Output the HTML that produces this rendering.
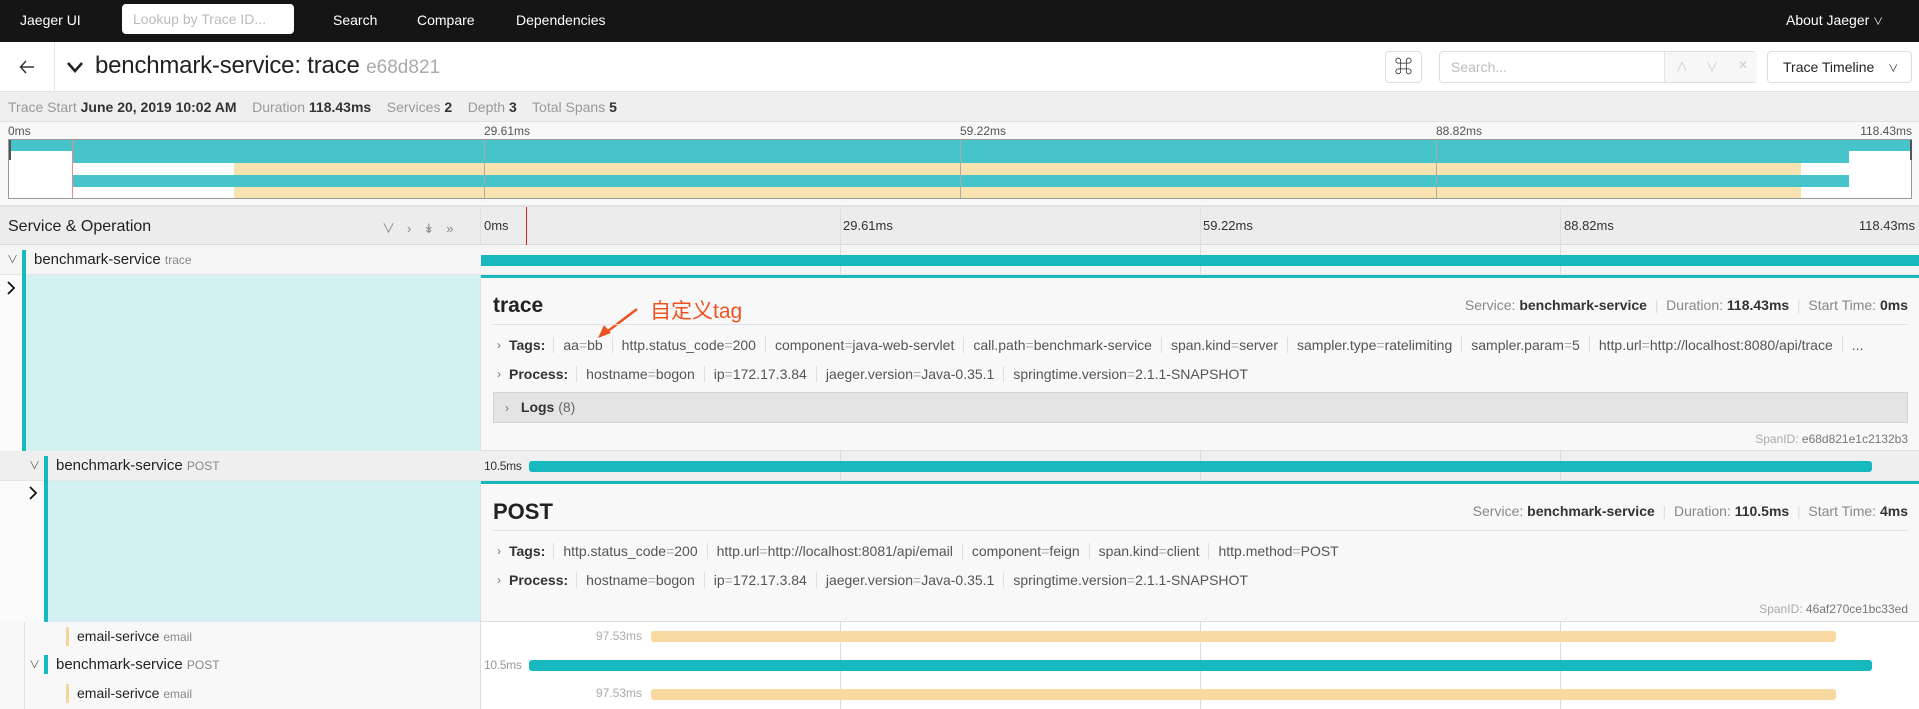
<!DOCTYPE html>
<html><head><meta charset="utf-8"><style>
*{box-sizing:border-box;margin:0;padding:0}
body{width:1919px;height:709px;overflow:hidden;background:#fff;font-family:"Liberation Sans","Noto Sans CJK SC",sans-serif;color:#222;position:relative}
.a{position:absolute;white-space:nowrap}
.g{color:#888}
.tagrow{position:absolute;display:flex;align-items:center;font-size:14px;height:20px}
.tagrow .lb{font-weight:bold;color:#333;margin-right:8px}
.tagrow .it{padding:0 9px;border-left:1px solid #ddd;color:#555}
.tagrow .it:first-of-type{border-left:none;padding-left:0}
.eq{color:#aaa}
.car{color:#777;font-size:12px;margin-right:8px}
.tick{position:absolute;width:1px;background:#ddd}
.bar{position:absolute;border-radius:3px}
</style></head><body>
<!-- nav -->
<div class="a" style="left:0;top:0;width:1919px;height:42px;background:#151515"></div>
<div class="a" style="left:20px;top:12px;color:#fff;font-size:14px">Jaeger UI</div>
<div class="a" style="left:122px;top:4px;width:172px;height:30px;background:#fff;border-radius:4px;color:#bbb;font-size:14px;padding:7px 11px">Lookup by Trace ID...</div>
<div class="a" style="left:333px;top:12px;color:#fff;font-size:14px">Search</div>
<div class="a" style="left:417px;top:12px;color:#fff;font-size:14px">Compare</div>
<div class="a" style="left:516px;top:12px;color:#fff;font-size:14px">Dependencies</div>
<div class="a" style="left:1786px;top:12px;color:#fff;font-size:14px">About Jaeger <span style="font-size:10px">&#8744;</span></div>
<!-- header -->
<svg class="a" style="left:18px;top:58px" width="18" height="18" viewBox="0 0 18 18"><path d="M16 9H3M8 3L2.5 9 8 15" fill="none" stroke="#333" stroke-width="1.5"/></svg>
<div class="a" style="left:54px;top:42px;width:1px;height:49px;background:#e4e4e4"></div>
<svg class="a" style="left:66px;top:60px" width="18" height="14" viewBox="0 0 18 14"><path d="M2 3L9 11 16 3" fill="none" stroke="#222" stroke-width="2.6"/></svg>
<div class="a" style="left:95px;top:52px;font-size:24px;letter-spacing:-0.2px;font-weight:500">benchmark-service: trace <span style="color:#aaa;font-size:19px;letter-spacing:0">e68d821</span></div>
<div class="a" style="left:1385px;top:51px;width:37px;height:32px;border:1px solid #ddd;border-radius:4px;text-align:center;font-size:18px;line-height:30px">&#8984;</div>
<div class="a" style="left:1439px;top:51px;width:318px;height:32px;border:1px solid #ddd;border-radius:4px;background:#fff"></div>
<div class="a" style="left:1451px;top:59px;font-size:14px;color:#bbb">Search...</div>
<div class="a" style="left:1664px;top:52px;width:93px;height:30px;background:#f7f7f7;border-left:1px solid #e4e4e4"></div>
<div class="a" style="left:1676px;top:58px;color:#ccc;font-size:12px">&#8743;</div>
<div class="a" style="left:1706px;top:58px;color:#ccc;font-size:12px">&#8744;</div>
<div class="a" style="left:1738px;top:58px;color:#ccc;font-size:12px">&#10005;</div>
<div class="a" style="left:1767px;top:51px;width:145px;height:32px;border:1px solid #ddd;border-radius:4px;font-size:14px;padding:7px 15px">Trace Timeline <span style="font-size:10px;margin-left:10px">&#8744;</span></div>
<!-- summary -->
<div class="a" style="left:0;top:91px;width:1919px;height:31px;background:#efefef;border-top:1px solid #e2e2e2;border-bottom:1px solid #e2e2e2"></div>
<div class="a" style="left:8px;top:99px;font-size:14px;color:#999">Trace Start <b style="color:#333">June 20, 2019 10:02 AM</b>&nbsp;&nbsp;&nbsp; Duration <b style="color:#333">118.43ms</b>&nbsp;&nbsp;&nbsp; Services <b style="color:#333">2</b>&nbsp;&nbsp;&nbsp; Depth <b style="color:#333">3</b>&nbsp;&nbsp;&nbsp; Total Spans <b style="color:#333">5</b></div>
<!-- minimap -->
<div class="a" style="left:0;top:122px;width:1919px;height:85px;background:#f8f8f8;border-bottom:2px solid #e2e2e2"></div>
<div class="a" style="left:8px;top:124px;font-size:12px;color:#555">0ms</div>
<div class="a" style="left:484px;top:124px;font-size:12px;color:#555">29.61ms</div>
<div class="a" style="left:960px;top:124px;font-size:12px;color:#555">59.22ms</div>
<div class="a" style="left:1436px;top:124px;font-size:12px;color:#555">88.82ms</div>
<div class="a" style="right:7px;top:124px;font-size:12px;color:#555">118.43ms</div>
<div class="a" style="left:8px;top:139px;width:1904px;height:60px;background:#fff;border:1px solid #999"></div>
<div class="a" style="left:9px;top:140px;width:1903px;height:11px;background:#46c4c9"></div>
<div class="a" style="left:72px;top:151px;width:1777px;height:12px;background:#46c4c9"></div>
<div class="a" style="left:234px;top:163px;width:1567px;height:12px;background:#f8e2b0"></div>
<div class="a" style="left:72px;top:175px;width:1777px;height:12px;background:#46c4c9"></div>
<div class="a" style="left:234px;top:187px;width:1567px;height:11px;background:#f8e2b0"></div>
<div class="a" style="left:72px;top:140px;width:1px;height:58px;background:#f08a8a"></div>
<div class="a" style="left:9px;top:140px;width:2px;height:20px;background:#555"></div>
<div class="a" style="left:1910px;top:140px;width:2px;height:20px;background:#555"></div>
<div class="tick" style="left:484px;top:140px;height:58px;background:#aaa"></div>
<div class="tick" style="left:960px;top:140px;height:58px;background:#aaa"></div>
<div class="tick" style="left:1436px;top:140px;height:58px;background:#aaa"></div>
<!-- timeline header -->
<div class="a" style="left:0;top:207px;width:1919px;height:38px;background:#ececec;border-bottom:1px solid #d8d8d8"></div>
<div class="a" style="left:8px;top:218px;font-size:16px;color:#222">Service &amp; Operation</div>
<div class="a" style="left:382px;top:218px;font-size:13px;color:#888;letter-spacing:12px">&#8744;&#8250;&#8609;&#187;</div>
<div class="a" style="left:480px;top:207px;width:1px;height:502px;background:#ddd"></div>
<div class="a" style="left:484px;top:218px;font-size:13px;color:#333">0ms</div>
<div class="a" style="left:843px;top:218px;font-size:13px;color:#333">29.61ms</div>
<div class="a" style="left:1203px;top:218px;font-size:13px;color:#333">59.22ms</div>
<div class="a" style="left:1564px;top:218px;font-size:13px;color:#333">88.82ms</div>
<div class="a" style="right:4px;top:218px;font-size:13px;color:#333">118.43ms</div>
<div class="tick" style="left:840px;top:207px;height:38px"></div>
<div class="tick" style="left:1200px;top:207px;height:38px"></div>
<div class="tick" style="left:1560px;top:207px;height:38px"></div>
<div class="a" style="left:526px;top:207px;width:1px;height:38px;background:#d22"></div>
<!-- row1 -->
<div class="a" style="left:0;top:245px;width:1919px;height:30px;background:#f5f5f5;border-bottom:1px solid #e4e4e4"></div>
<div class="tick" style="left:840px;top:245px;height:30px"></div><div class="tick" style="left:1200px;top:245px;height:30px"></div><div class="tick" style="left:1560px;top:245px;height:30px"></div>
<div class="a" style="left:7px;top:251px;font-size:11px;color:#666">&#8744;</div>
<div class="a" style="left:22px;top:250px;width:4px;height:201px;background:#17b8be"></div>
<div class="a" style="left:34px;top:251px;font-size:15px">benchmark-service <span class="g" style="font-size:12px">trace</span></div>
<div class="a" style="left:481px;top:255px;width:1438px;height:11px;background:#17b8be"></div>
<!-- detail1 -->
<div class="a" style="left:26px;top:275px;width:454px;height:176px;background:#d3f1f2"></div>
<div class="a" style="left:0;top:275px;width:22px;height:176px;background:#fafafa"></div>
<svg class="a" style="left:6px;top:281px" width="10" height="14" viewBox="0 0 10 14"><path d="M2 1L8 7 2 13" fill="none" stroke="#111" stroke-width="1.8"/></svg>
<div class="a" style="left:481px;top:275px;width:1438px;height:176px;background:#f8f8f8;border-top:3px solid #17b8be;border-bottom:1px solid #e0e0e0"></div>
<div class="a" style="left:493px;top:294px;font-size:21px;font-weight:bold">trace</div>
<div class="a" style="left:650px;top:295px;font-size:21px;color:#ef5222">自定义tag</div>
<svg class="a" style="left:595px;top:305px" width="50" height="35" viewBox="0 0 50 35"><path d="M42 4L9 29" stroke="#ef5222" stroke-width="2.5"/><path d="M3 33L9 20 16 28Z" fill="#ef5222"/></svg>
<div class="a" style="right:11px;top:297px;font-size:14px;color:#888">Service: <b style="color:#333">benchmark-service</b> <span style="color:#ddd">&nbsp;|&nbsp;</span> Duration: <b style="color:#333">118.43ms</b> <span style="color:#ddd">&nbsp;|&nbsp;</span> Start Time: <b style="color:#333">0ms</b></div>
<div class="a" style="left:493px;top:324px;width:1415px;height:1px;background:#e2e2e2"></div>
<div class="tagrow" style="left:497px;top:335px"><span class="car">&#8250;</span><span class="lb">Tags:</span><span class="it">aa<span class="eq">=</span>bb</span><span class="it">http.status_code<span class="eq">=</span>200</span><span class="it">component<span class="eq">=</span>java-web-servlet</span><span class="it">call.path<span class="eq">=</span>benchmark-service</span><span class="it">span.kind<span class="eq">=</span>server</span><span class="it">sampler.type<span class="eq">=</span>ratelimiting</span><span class="it">sampler.param<span class="eq">=</span>5</span><span class="it">http.url<span class="eq">=</span>http://localhost:8080/api/trace</span><span class="it">...</span></div>
<div class="tagrow" style="left:497px;top:364px"><span class="car">&#8250;</span><span class="lb">Process:</span><span class="it">hostname<span class="eq">=</span>bogon</span><span class="it">ip<span class="eq">=</span>172.17.3.84</span><span class="it">jaeger.version<span class="eq">=</span>Java-0.35.1</span><span class="it">springtime.version<span class="eq">=</span>2.1.1-SNAPSHOT</span></div>
<div class="a" style="left:493px;top:392px;width:1415px;height:31px;background:#e4e4e4;border:1px solid #d4d4d4"></div>
<div class="a" style="left:505px;top:399px;font-size:14px;color:#333"><span class="car">&#8250;</span> <b>Logs</b> <span style="color:#666">(8)</span></div>
<div class="a" style="right:11px;top:432px;font-size:12px;color:#aaa">SpanID: <span style="color:#777">e68d821e1c2132b3</span></div>
<!-- row2 -->
<div class="a" style="left:0;top:451px;width:1919px;height:30px;background:#efefef;border-bottom:1px solid #e4e4e4"></div>
<div class="tick" style="left:840px;top:451px;height:30px"></div><div class="tick" style="left:1200px;top:451px;height:30px"></div><div class="tick" style="left:1560px;top:451px;height:30px"></div>
<div class="a" style="left:29px;top:457px;font-size:11px;color:#666">&#8744;</div>
<div class="a" style="left:44px;top:456px;width:4px;height:166px;background:#17b8be"></div>
<div class="a" style="left:56px;top:457px;font-size:15px">benchmark-service <span class="g" style="font-size:12px">POST</span></div>
<div class="a" style="left:484px;top:459px;font-size:12px;color:#333;letter-spacing:-0.3px">10.5ms</div>
<div class="bar" style="left:529px;top:461px;width:1343px;height:11px;background:#17b8be"></div>
<!-- detail2 -->
<div class="a" style="left:48px;top:481px;width:432px;height:141px;background:#d3f1f2"></div>
<div class="a" style="left:0;top:481px;width:44px;height:141px;background:#fafafa"></div>
<svg class="a" style="left:28px;top:486px" width="10" height="14" viewBox="0 0 10 14"><path d="M2 1L8 7 2 13" fill="none" stroke="#111" stroke-width="1.8"/></svg>
<div class="a" style="left:481px;top:481px;width:1438px;height:141px;background:#f8f8f8;border-top:3px solid #17b8be;border-bottom:1px solid #e0e0e0"></div>
<div class="a" style="left:493px;top:499px;font-size:22px;font-weight:bold">POST</div>
<div class="a" style="right:11px;top:503px;font-size:14px;color:#888">Service: <b style="color:#333">benchmark-service</b> <span style="color:#ddd">&nbsp;|&nbsp;</span> Duration: <b style="color:#333">110.5ms</b> <span style="color:#ddd">&nbsp;|&nbsp;</span> Start Time: <b style="color:#333">4ms</b></div>
<div class="a" style="left:493px;top:530px;width:1415px;height:1px;background:#e2e2e2"></div>
<div class="tagrow" style="left:497px;top:541px"><span class="car">&#8250;</span><span class="lb">Tags:</span><span class="it">http.status_code<span class="eq">=</span>200</span><span class="it">http.url<span class="eq">=</span>http://localhost:8081/api/email</span><span class="it">component<span class="eq">=</span>feign</span><span class="it">span.kind<span class="eq">=</span>client</span><span class="it">http.method<span class="eq">=</span>POST</span></div>
<div class="tagrow" style="left:497px;top:570px"><span class="car">&#8250;</span><span class="lb">Process:</span><span class="it">hostname<span class="eq">=</span>bogon</span><span class="it">ip<span class="eq">=</span>172.17.3.84</span><span class="it">jaeger.version<span class="eq">=</span>Java-0.35.1</span><span class="it">springtime.version<span class="eq">=</span>2.1.1-SNAPSHOT</span></div>
<div class="a" style="right:11px;top:602px;font-size:12px;color:#aaa">SpanID: <span style="color:#777">46af270ce1bc33ed</span></div>
<!-- rows 3-5 -->
<div class="a" style="left:0;top:622px;width:480px;height:87px;background:#f8f8f8"></div>
<div class="tick" style="left:840px;top:622px;height:87px"></div><div class="tick" style="left:1200px;top:622px;height:87px"></div><div class="tick" style="left:1560px;top:622px;height:87px"></div>
<div class="a" style="left:24px;top:622px;width:1px;height:87px;background:#e2e2e2"></div>
<div class="a" style="left:66px;top:627px;width:3px;height:19px;background:#f7d59a"></div>
<div class="a" style="left:77px;top:628px;font-size:14px">email-serivce <span class="g" style="font-size:12px">email</span></div>
<div class="a" style="left:596px;top:629px;font-size:12px;color:#aaa">97.53ms</div>
<div class="bar" style="left:651px;top:631px;width:1185px;height:11px;background:#f8d99f"></div>
<div class="a" style="left:29px;top:656px;font-size:11px;color:#666">&#8744;</div>
<div class="a" style="left:44px;top:655px;width:4px;height:19px;background:#17b8be"></div>
<div class="a" style="left:56px;top:656px;font-size:15px">benchmark-service <span class="g" style="font-size:12px">POST</span></div>
<div class="a" style="left:484px;top:658px;font-size:12px;color:#999;letter-spacing:-0.3px">10.5ms</div>
<div class="bar" style="left:529px;top:660px;width:1343px;height:11px;background:#17b8be"></div>
<div class="a" style="left:66px;top:684px;width:3px;height:19px;background:#f7d59a"></div>
<div class="a" style="left:77px;top:685px;font-size:14px">email-serivce <span class="g" style="font-size:12px">email</span></div>
<div class="a" style="left:596px;top:686px;font-size:12px;color:#aaa">97.53ms</div>
<div class="bar" style="left:651px;top:689px;width:1185px;height:11px;background:#f8d99f"></div>
</body></html>
